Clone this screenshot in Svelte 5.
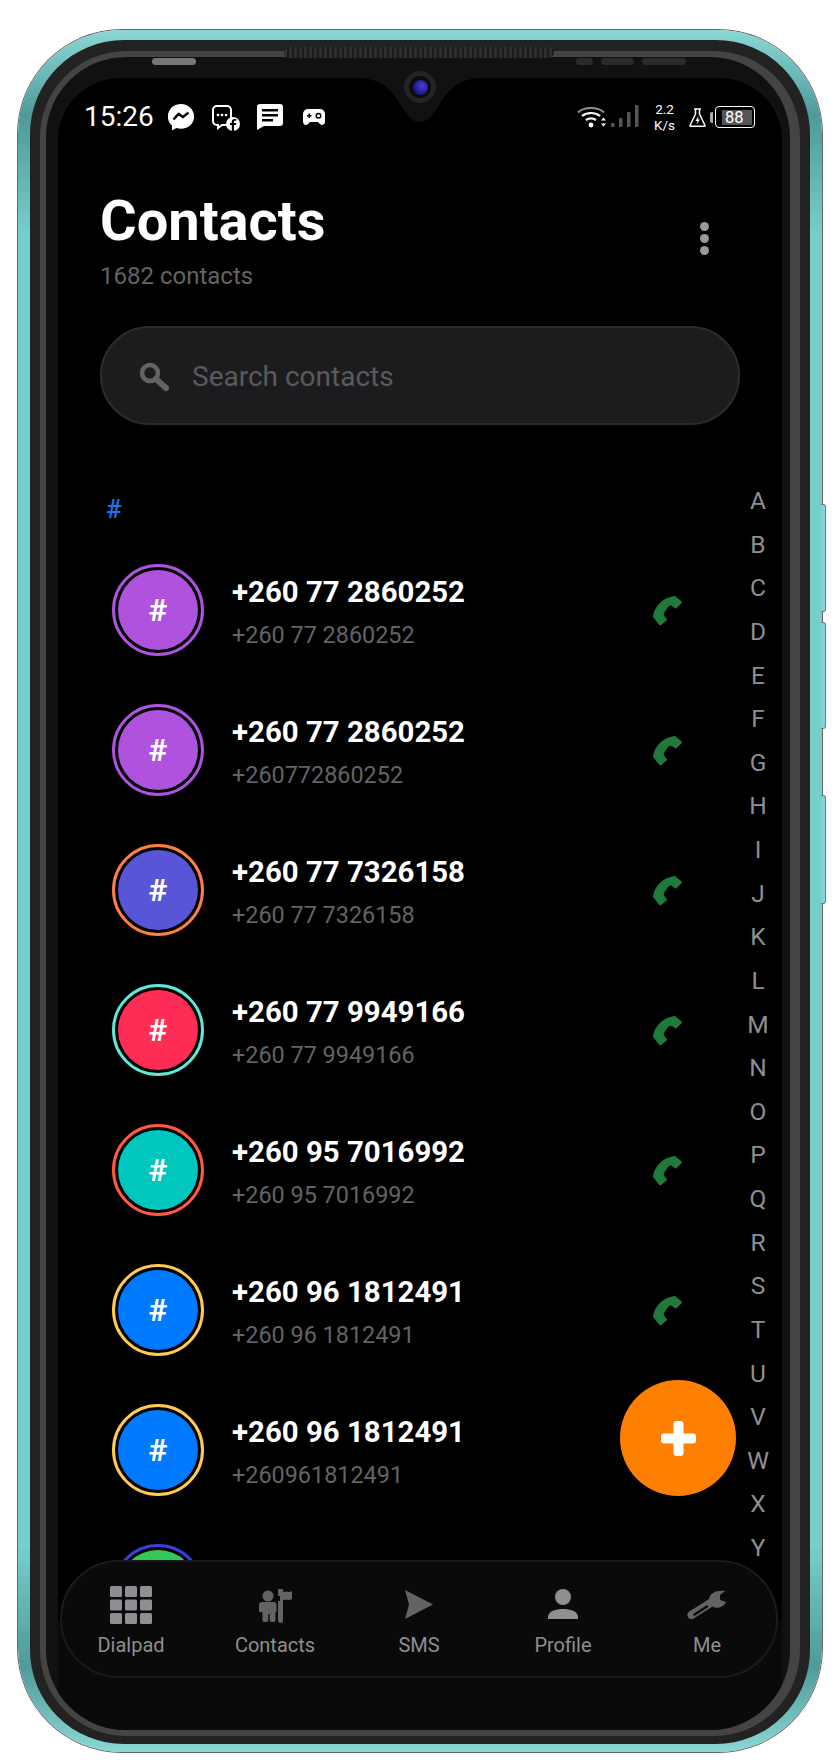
<script lang="ts">
	const contacts = [
		{ name: '+260 77 2860252', sub: '+260 77 2860252', ring: '#af52de', fill: '#af52de' },
		{ name: '+260 77 2860252', sub: '+260772860252', ring: '#af52de', fill: '#af52de' },
		{ name: '+260 77 7326158', sub: '+260 77 7326158', ring: '#ff7f3f', fill: '#5856d6' },
		{ name: '+260 77 9949166', sub: '+260 77 9949166', ring: '#5ee8d8', fill: '#ff2d55' },
		{ name: '+260 95 7016992', sub: '+260 95 7016992', ring: '#ff5a40', fill: '#00c7be' },
		{ name: '+260 96 1812491', sub: '+260 96 1812491', ring: '#ffcc4d', fill: '#007aff' },
		{ name: '+260 96 1812491', sub: '+260961812491', ring: '#ffcc4d', fill: '#007aff' },
		// only the top of this avatar shows above the nav
		{ name: '', sub: '', ring: '#3440e0', fill: '#34c759' }
	];
	const letters = 'ABCDEFGHIJKLMNOPQRSTUVWXY'.split('');
</script>

<div class="phone">
	<span class="btn b1"></span>
	<span class="btn b2"></span>
	<span class="btn b3"></span>

	<div class="teal">
		<div class="rim">
			<div class="ring">
				<div class="bezel">
					<div class="screen">
						<div class="status">
							<span class="time">15:26</span>
							<svg class="ic-messenger" width="30" height="30" viewBox="0 0 24 24">
								<path fill="#fff" d="M12 1.500C6 1.500 1.500 5.800 1.500 11.500c0 3 1.200 5.500 3.300 7.300v3.900l3.500-1.900c1.100.3 2.400.5 3.700.5 6 0 10.500-4.300 10.500-9.800S18 1.500 12 1.500z" />
								<path fill="none" stroke="#000" stroke-width="2" stroke-linejoin="round" d="M6 14l4-4.500 3.500 2.500L18 8.500" />
							</svg>
							<svg class="ic-group" width="30" height="27" viewBox="0 0 30 27">
								<path fill="none" stroke="#fff" stroke-width="2" d="M20 15V6a4 4 0 0 0-4-4H6a4 4 0 0 0-4 4v11a4 4 0 0 0 4 4h1v3l4-3h5" />
								<circle cx="7" cy="11" r="1.300" fill="#fff" /><circle cx="11" cy="11" r="1.300" fill="#fff" /><circle cx="15" cy="11" r="1.300" fill="#fff" />
								<circle cx="22" cy="20" r="7" fill="#fff" />
								<path fill="#000" d="M23 27v-6h2l.3-2H23v-1.300c0-.6.2-1 1-1h1.300V15h-1.700c-1.900 0-2.800 1.100-2.800 2.700V19H19v2h1.800v6z" />
							</svg>
							<svg class="ic-msg" width="26" height="26" viewBox="0 0 26 26">
								<path fill="#fff" d="M3 0h20a3 3 0 0 1 3 3v16a3 3 0 0 1-3 3H7l-7 4V3a3 3 0 0 1 3-3z" />
								<path fill="#000" d="M5 5h16v2.500H5zM5 10h16v2.500H5zM5 15h11v2.500H5z" />
							</svg>
							<svg class="ic-game" width="22" height="16" viewBox="0 0 22 16">
								<path fill="#fff" d="M5 0h12a5 5 0 0 1 5 5v8a3 3 0 0 1-5.300 1.800L15 13H7l-1.700 1.800A3 3 0 0 1 0 13V5a5 5 0 0 1 5-5z" />
								<path fill="#000" d="M4 6h1.500V4.500H7V6h1.500v1.500H7V9H5.500V7.500H4z" />
								<circle cx="15.500" cy="6.800" r="2.300" fill="none" stroke="#000" stroke-width="1.500" />
							</svg>

							<span class="grow"></span>

							<svg width="28" height="24" viewBox="0 0 28 24">
								<path fill="none" stroke="#8e8e93" stroke-width="2.200" d="M1 7.500C7 1.500 21 1.500 27 7.500" />
								<path fill="none" stroke="#fff" stroke-width="2.200" d="M5 11c5-4 13-4 18 0" />
								<path fill="none" stroke="#fff" stroke-width="2.200" d="M9 15c3-2 7-2 10 0" />
								<circle cx="14" cy="20" r="2.400" fill="#fff" />
							</svg>
							<svg class="ic-bars" width="38" height="24" viewBox="0 0 38 24">
								<path fill="#fff" d="M0 15.500l2.500-3 2.500 3zM0 18.500h5l-2.500 3z" />
								<rect x="10" y="18" width="3.500" height="4" rx="1" fill="#555" />
								<rect x="18" y="13" width="3.500" height="9" rx="1" fill="#555" />
								<rect x="26" y="7" width="3.500" height="15" rx="1" fill="#555" />
								<rect x="34" y="0" width="3.500" height="22" rx="1" fill="#555" />
							</svg>
							<span class="speed">2.2<br />K/s</span>
							<svg class="ic-flask" width="18" height="19" viewBox="0 0 18 19">
								<path fill="none" stroke="#fff" stroke-width="1.500" stroke-linejoin="round" d="M5 1h7M6.500 1v5L1 17.500a.5.500 0 0 0 .4.700h14.200a.5.500 0 0 0 .4-.700L10.500 6V1" />
								<path fill="#fff" d="M9.500 8l-3 5h2l-1 3.500 3.500-5H9z" />
							</svg>
							<span class="batt-tip"></span>
							<span class="batt"><span class="batt-fill">88</span></span>
						</div>

						<header class="head">
							<div>
								<h1>Contacts</h1>
								<p>1682 contacts</p>
							</div>
							<div class="dots"><i></i><i></i><i></i></div>
						</header>

						<div class="search">
							<svg width="32" height="32" viewBox="0 0 32 32">
								<circle cx="12" cy="12" r="8" fill="none" stroke="#636366" stroke-width="4.500" />
								<path d="M18 18l10 9" stroke="#636366" stroke-width="6" stroke-linecap="round" />
							</svg>
							<span>Search contacts</span>
						</div>

						<div class="section">#</div>

						<div class="list">
							{#each contacts as c}
								<div class="row">
									<div class="avatar" style="border-color:{c.ring}">
										<div class="inner" style="background:{c.fill}">{c.name ? '#' : ''}</div>
									</div>
									{#if c.name}
										<div class="info">
											<div class="name">{c.name}</div>
											<div class="sub">{c.sub}</div>
										</div>
										<svg class="call" width="31" height="31" viewBox="0 0 30 30">
											<path fill="#1f7a3c" stroke="#1f7a3c" stroke-width="2" stroke-linejoin="round" d="M2 21C3 12 10 4 22 2l6 5-5 5-5-3.500C15 10 12 14 10 19l3.500 5-5.500 4.500z" />
										</svg>
									{/if}
								</div>
							{/each}
						</div>

						<div class="index">
							{#each letters as l}
								<span>{l}</span>
							{/each}
						</div>

						<button class="fab" aria-label="Add contact">
							<svg width="35" height="35" viewBox="0 0 35 35" fill="#fff">
								<rect x="0" y="12.500" width="35" height="10" rx="3" />
								<rect x="12.500" y="0" width="10" height="35" rx="3" />
							</svg>
						</button>
					</div>

					<div class="chin"></div>

					<nav class="nav">
						<div class="tab">
							<svg width="42" height="38" viewBox="0 0 42 38" fill="#8e8e93">
								{#each [0, 1, 2] as y}
									{#each [0, 1, 2] as x}
										<rect x={x * 15} y={y * 13.500} width="12" height="11" rx="1.500" />
									{/each}
								{/each}
							</svg>
							<span>Dialpad</span>
						</div>
						<div class="tab">
							<svg width="34" height="38" viewBox="0 -2 34 38" fill="#636366">
								<circle cx="10" cy="8" r="5.500" />
								<path d="M4 14h12c1.500 0 2.500 1 2.500 2.500V24h-1v8c0 1-.7 2-2 2h-2c-1 0-1.800-1-1.800-2v-6h-1.400v6c0 1-.8 2-1.800 2H6.500c-1.300 0-2-1-2-2v-8H1v-7.500C1 15 2.500 14 4 14z" />
								<path d="M20 13h2V8h-2V1h5v3c3-1 6 1 9-1v8c-3 2-6 0-9 1v21c0 1-.8 2-2.500 2S20 33 20 32z" />
							</svg>
							<span>Contacts</span>
						</div>
						<div class="tab">
							<svg width="30" height="38" viewBox="0 -4 30 38" fill="#636366">
								<path d="M1 0l28 14.500L1 29l4-14.500z" />
							</svg>
							<span>SMS</span>
						</div>
						<div class="tab">
							<svg width="32" height="38" viewBox="0 -3 32 38" fill="#8e8e93">
								<circle cx="16" cy="8" r="8" />
								<path d="M1 30v-2c0-6 8-8 15-8s15 2 15 8v2z" />
							</svg>
							<span>Profile</span>
						</div>
						<div class="tab">
							<svg width="40" height="38" viewBox="0 -4 40 38">
								<path fill="none" stroke="#636366" stroke-width="8" stroke-linecap="round" d="M4.500 25L25 12" />
								<path fill="none" stroke="#0a0a0a" stroke-width="2.500" stroke-linecap="round" d="M7.500 24.500L20 16.500" />
								<path fill="#636366" d="M22 9C23 3 29 0 38 1l-5 4v5l6 2c-2 5-9 7-13 5z" />
							</svg>
							<span>Me</span>
						</div>
					</nav>
				</div>
			</div>
		</div>
	</div>

	<div class="speaker"></div>
	<div class="sensor s1"></div>
	<div class="sensor s2"></div>
	<div class="sensor s3"></div>
	<div class="sensor s4"></div>
	<svg class="notch" width="130" height="46" viewBox="0 0 130 46">
		<path fill="#111" d="M0 1C22 1 32 8 42 22 50 34 55 45 65 45S80 34 88 22C98 8 108 1 130 1V0H0z" />
	</svg>
	<div class="lens"><b><i></i></b></div>
</div>

<style>
	:global(body) {
		margin: 0;
		background: #fff;
		font-family: Roboto, 'Liberation Sans', sans-serif;
	}

	.phone {
		position: relative;
		width: 840px;
		height: 1760px;
		padding: 30px 18px 8px;
		box-sizing: border-box;
	}

	.teal {
		height: 100%;
		box-sizing: border-box;
		padding: 10px 12px 8px;
		border-radius: 104px;
		background: linear-gradient(180deg, #8ad8d6 0, #4f9a98 5%, #76cfcd 12%, #76cfcd 88%, #4f9a98 95%, #8ad8d6 100%);
		box-shadow: 0 0 0 1px #666;
	}

	.rim {
		height: 100%;
		box-sizing: border-box;
		padding: 11px 10px 8px;
		border-radius: 94px;
		background: #222;
	}

	.ring {
		height: 100%;
		box-sizing: border-box;
		padding: 6px 10px 6px 6px;
		border-radius: 86px;
		background: #444;
	}

	.bezel {
		position: relative;
		display: flex;
		flex-direction: column;
		height: 100%;
		box-sizing: border-box;
		padding: 21px 8px 0 12px;
		border-radius: 80px;
		background: #111;
		overflow: hidden;
	}

	.screen {
		position: relative;
		flex: none;
		height: 1542px;
		padding-top: 1px;
		box-sizing: border-box;
		border-radius: 62px 62px 0 0;
		background: #000;
		color: #fff;
		overflow: hidden;
	}

	.chin {
		flex: 1;
		background: #0a0a0a;
	}

	.btn {
		position: absolute;
		left: 821px;
		width: 4px;
		background: #7fd6d4;
		border: 1px solid #777;
		border-left: 0;
		border-radius: 0 3px 3px 0;
	}
	.b1 { top: 504px; height: 106px; }
	.b2 { top: 622px; height: 105px; }
	.b3 { top: 795px; height: 107px; }

	.status {
		display: flex;
		align-items: center;
		height: 34px;
		margin: 21px 27px 0 26px;
	}
	.time {
		font-size: 28px;
		line-height: 1;
	}
	.ic-messenger { margin-left: 12px; }
	.ic-group { margin-left: 15px; }
	.ic-msg { margin-left: 16px; }
	.ic-game { margin-left: 20px; }
	.ic-bars { margin-left: -4px; }
	.ic-flask { margin-left: 14px; }
	.grow {
		flex: 1;
	}
	.speed {
		margin-left: 15px;
		font-size: 13.500px;
		line-height: 16px;
		text-align: center;
	}
	.batt-tip {
		width: 3px;
		height: 11px;
		margin-left: 3px;
		margin-right: 2px;
		border-radius: 2px 0 0 2px;
		background: #aaa;
	}
	.batt {
		display: flex;
		align-items: center;
		justify-content: flex-end;
		width: 40px;
		height: 22px;
		padding-right: 2px;
		box-sizing: border-box;
		border: 1.500px solid #fff;
		border-radius: 4px;
	}
	.batt-fill {
		width: 30px;
		padding-left: 3px;
		box-sizing: border-box;
		background: #555;
		font-size: 16.500px;
		line-height: 15px;
	}

	.head {
		display: flex;
		justify-content: space-between;
		align-items: center;
		margin: 57px 73px 0 42px;
	}
	h1 {
		margin: 0;
		font-size: 56px;
		line-height: 60px;
		font-weight: 700;
	}
	.head p {
		margin: 11px 0 0;
		font-size: 24px;
		line-height: 28px;
		color: #636366;
	}
	.dots {
		display: flex;
		flex-direction: column;
		gap: 3px;
		margin-bottom: 5px;
	}
	.dots i {
		width: 9px;
		height: 9px;
		border-radius: 50%;
		background: #98989d;
	}

	.search {
		display: flex;
		align-items: center;
		gap: 22px;
		height: 99px;
		box-sizing: border-box;
		margin: 36px 42px 0 42px;
		padding: 2px 0 0 36px;
		border: 2px solid #2c2c2e;
		border-radius: 50px;
		background: #1c1c1e;
		font-size: 28px;
		color: #5a5a5e;
	}

	.section {
		margin: 70px 0 0 48px;
		font-size: 26px;
		line-height: 28px;
		font-weight: 500;
		color: #1a73e8;
	}

	.list {
		display: flex;
		flex-direction: column;
		margin-top: 41px;
	}
	.row {
		display: flex;
		align-items: center;
		flex: none;
		height: 92px;
		margin-bottom: 48px;
		padding-left: 54px;
	}
	.avatar {
		display: flex;
		align-items: center;
		justify-content: center;
		flex: none;
		width: 92px;
		height: 92px;
		box-sizing: border-box;
		border: 3px solid;
		border-radius: 50%;
	}
	.inner {
		width: 80px;
		height: 80px;
		border-radius: 50%;
		font-size: 32px;
		line-height: 80px;
		font-weight: 700;
		text-align: center;
	}
	.info {
		flex: 1;
		margin: 2px 0 0 28px;
	}
	.name {
		font-size: 29.400px;
		line-height: 36px;
		font-weight: 700;
	}
	.sub {
		margin-top: 11px;
		font-size: 23.400px;
		line-height: 28px;
		color: #636366;
	}
	.call {
		margin-right: 99px;
	}

	.index {
		position: absolute;
		top: 0;
		left: 688px;
		width: 24px;
		padding-top: 401px;
		display: flex;
		flex-direction: column;
		align-items: center;
	}
	.index span {
		height: 43.630px;
		font-size: 24.500px;
		line-height: 43.630px;
		color: #8e8e93;
	}

	.fab {
		position: absolute;
		top: 1302px;
		left: 562px;
		width: 116px;
		height: 116px;
		display: flex;
		align-items: center;
		justify-content: center;
		padding: 0;
		border: 0;
		border-radius: 50%;
		background: #ff7f00;
	}

	.nav {
		position: absolute;
		left: 14px;
		right: 12px;
		bottom: 52px;
		display: flex;
		justify-content: center;
		height: 118px;
		box-sizing: border-box;
		padding-top: 24px;
		border: 2px solid #1a1a1c;
		border-radius: 59px;
		background: #0a0a0a;
	}

	.tab {
		display: flex;
		flex-direction: column;
		align-items: center;
		flex: none;
		width: 144px;
		font-size: 20px;
		line-height: 24px;
		color: #8e8e93;
	}
	.tab span {
		margin-top: 9px;
	}

	.speaker {
		position: absolute;
		top: 47px;
		left: 284px;
		width: 270px;
		height: 11px;
		border-radius: 6px;
		background: repeating-linear-gradient(90deg, #2e2e2e 0 3px, #1c1c1c 3px 5px);
	}
	.sensor {
		position: absolute;
		top: 58px;
		height: 7px;
		border-radius: 4px;
		background: #2a2a2a;
	}
	.s1 { left: 152px; width: 44px; background: #777; }
	.s2 { left: 576px; width: 17px; }
	.s3 { left: 601px; width: 33px; }
	.s4 { left: 642px; width: 44px; }

	.notch {
		position: absolute;
		top: 77px;
		left: 355px;
	}
	.lens {
		position: absolute;
		top: 71px;
		left: 404px;
		width: 32px;
		height: 32px;
		border-radius: 50%;
		background: #242424;
		display: flex;
		align-items: center;
		justify-content: center;
	}
	.lens b {
		width: 22px;
		height: 22px;
		border-radius: 50%;
		background: #0c0c0c;
		display: flex;
		align-items: center;
		justify-content: center;
	}
	.lens i {
		width: 15px;
		height: 15px;
		border-radius: 50%;
		background: radial-gradient(circle at 60% 40%, #4a40d8, #221890 60%, #14104a);
	}
</style>
